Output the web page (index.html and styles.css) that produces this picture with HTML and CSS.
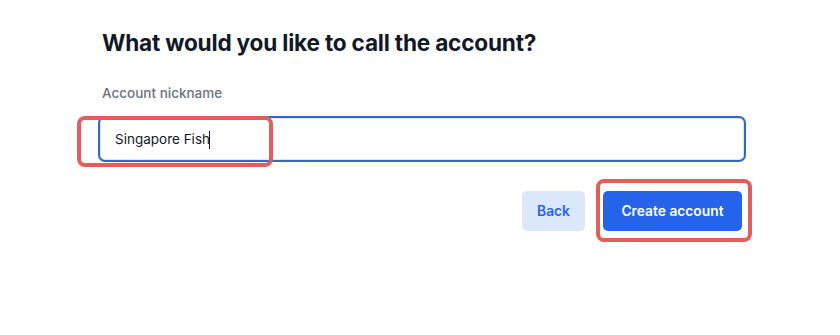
FILE: index.html
```html
<!DOCTYPE html>
<html lang="en">
<head>
    <meta charset="UTF-8">
    <meta name="viewport" content="width=device-width, initial-scale=1.0">
    <title>Name account</title>
    <link rel="stylesheet" href="styles.css">
</head>
<body>
    <div class="page">
        <h1 class="title">What would you like to call the account?</h1>

        <label class="label" for="nickname">Account nickname</label>
        <div class="field">
            <input id="nickname" class="input" type="text" value="Singapore Fish">
            <span class="caret"></span>
        </div>

        <div class="actions">
            <button class="btn btn-secondary">Back</button>
            <button class="btn btn-primary">Create account</button>
        </div>

        <!-- annotation highlights -->
        <div class="mark mark-input"></div>
        <div class="mark mark-create"></div>
    </div>
</body>
</html>
```

FILE: styles.css
```css
body {
    margin: 0;
    background: #ffffff;
    font-family: Inter, "Noto Sans", sans-serif;
    color: #111827;
}
.page {
    position: relative;
    width: 640px;
    height: 335px;
    padding-left: 102px;
    box-sizing: content-box;
}
.title {
    margin: 0;
    padding-top: 27px;
    font-size: 22.6px;
    line-height: 32px;
    font-weight: 700;
    letter-spacing: -0.2px;
}
.label {
    display: block;
    margin-top: 24px;
    font-size: 13.5px;
    line-height: 20px;
    font-weight: 500;
    color: #6b7280;
}
.field {
    position: relative;
    margin: 13px -4px 0;
}
.input {
    display: block;
    width: 100%;
    height: 46px;
    box-sizing: border-box;
    padding: 0 15px;
    border: 2px solid #3366c9;
    border-radius: 7px;
    box-shadow: inset 0 0 0 1px #dde5f2;
    font-family: inherit;
    font-size: 13.5px;
    color: #111827;
    outline: none;
    background: #ffffff;
}
.caret {
    position: absolute;
    left: 111px;
    top: 15px;
    width: 1px;
    height: 18px;
    background: #111827;
}
.actions {
    display: flex;
    justify-content: flex-end;
    gap: 18px;
    margin-top: 29px;
}
.btn {
    height: 40px;
    border: none;
    border-radius: 5px;
    font-family: inherit;
    font-size: 13.8px;
    font-weight: 600;
    cursor: pointer;
}
.btn-secondary {
    width: 63px;
    background: #dbe8fc;
    color: #2563eb;
}
.btn-primary {
    width: 139px;
    background: #2563eb;
    color: #ffffff;
}
.mark {
    position: absolute;
    border: 4px solid #e35d5b;
    border-radius: 8px;
    box-sizing: border-box;
    pointer-events: none;
}
.mark-input {
    left: 77px;
    top: 116px;
    width: 196px;
    height: 51px;
}
.mark-create {
    left: 596px;
    top: 179px;
    width: 156px;
    height: 63px;
}
```
